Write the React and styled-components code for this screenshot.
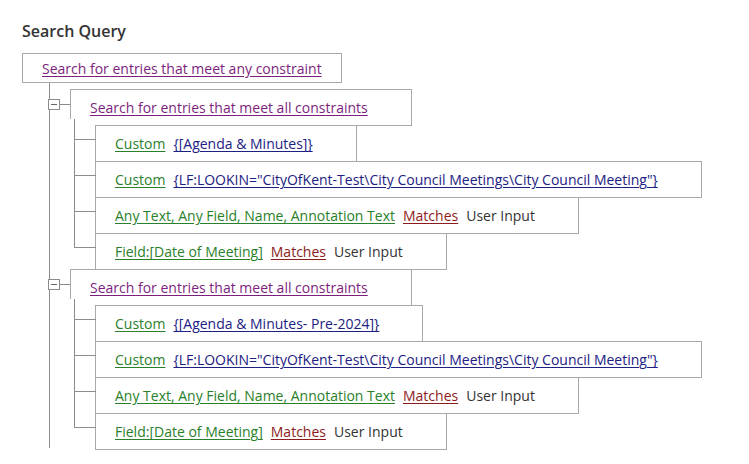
import React from 'react';
import styled, { createGlobalStyle } from 'styled-components';

const GlobalStyle = createGlobalStyle`
  body {
    margin: 0;
    background: #fff;
    font-family: 'Open Sans', 'Liberation Sans', sans-serif;
  }
`;

const LINE = '#8c8c8c';
const BOX = '#a9a9a9';

const Page = styled.div`
  padding: 20px 22px;
  font-size: 14px;
`;

const Title = styled.h2`
  margin: 0 0 11px;
  font-size: 16px;
  font-weight: 600;
  line-height: 22px;
  color: #333;
`;

const RootBox = styled.div`
  width: fit-content;
  height: 30px;
  box-sizing: border-box;
  border: 1px solid ${BOX};
  padding: 0 19px;
  display: flex;
  align-items: center;
`;

const Tree = styled.div`
  position: relative;
  margin-left: 27px;
  padding-top: 6px;
  &::before {
    content: '';
    position: absolute;
    left: 0;
    top: 0;
    bottom: 2px;
    border-left: 1px solid ${LINE};
  }
`;

const Group = styled.div`
  position: relative;
  padding-left: 21px;
  & + & {
    margin-top: -1px;
  }
`;

const Toggle = styled.span`
  position: absolute;
  left: -1px;
  top: 10px;
  width: 12px;
  height: 11px;
  box-sizing: border-box;
  border: 1px solid ${LINE};
  background: #fff;
  z-index: 2;
  &::after {
    content: '';
    position: absolute;
    left: 2px;
    right: 2px;
    top: 4px;
    border-top: 1px solid #666;
  }
`;

const Elbow = styled.span`
  position: absolute;
  left: 11px;
  top: 15px;
  width: 10px;
  border-top: 1px solid ${LINE};
`;

const Box = styled.div`
  width: fit-content;
  height: 37px;
  box-sizing: border-box;
  border: 1px solid ${BOX};
  padding: 0 43px 0 19px;
  display: flex;
  align-items: center;
  gap: 8px;
  white-space: nowrap;
`;

const Children = styled.div`
  position: relative;
  margin: -1px 0 0 4px;
  padding-left: 21px;
  display: flex;
  flex-direction: column;
  align-items: flex-start;
  &::before {
    content: '';
    position: absolute;
    left: -4px;
    width: 25px;
    top: -6px;
    bottom: 0;
    background: #fff;
  }
  &::after {
    content: '';
    position: absolute;
    left: 0;
    top: -6px;
    bottom: 22px;
    border-left: 1px solid ${LINE};
  }
`;

const Row = styled(Box)`
  position: relative;
  & + & {
    margin-top: -1px;
  }
  &::before {
    content: '';
    position: absolute;
    left: -22px;
    top: 13px;
    width: 22px;
    border-top: 1px solid ${LINE};
  }
`;

const colors = {
  purple: '#7d1f7d',
  green: '#2a7f2a',
  blue: '#1c2183',
  red: '#8e1b1b',
  plain: '#333',
};

const Part = styled.span`
  color: ${(p) => colors[p.$tone]};
  text-decoration: ${(p) => (p.$tone === 'plain' ? 'none' : 'underline')};
  text-underline-offset: 2px;
  cursor: ${(p) => (p.$tone === 'plain' ? 'default' : 'pointer')};
`;

const lookin =
  '{LF:LOOKIN="CityOfKent-Test\\City Council Meetings\\City Council Meeting"}';

const groups = [
  {
    rows: [
      [['green', 'Custom'], ['blue', '{[Agenda & Minutes]}']],
      [['green', 'Custom'], ['blue', lookin]],
      [
        ['green', 'Any Text, Any Field, Name, Annotation Text'],
        ['red', 'Matches'],
        ['plain', 'User Input'],
      ],
      [['green', 'Field:[Date of Meeting]'], ['red', 'Matches'], ['plain', 'User Input']],
    ],
  },
  {
    rows: [
      [['green', 'Custom'], ['blue', '{[Agenda & Minutes- Pre-2024]}']],
      [['green', 'Custom'], ['blue', lookin]],
      [
        ['green', 'Any Text, Any Field, Name, Annotation Text'],
        ['red', 'Matches'],
        ['plain', 'User Input'],
      ],
      [['green', 'Field:[Date of Meeting]'], ['red', 'Matches'], ['plain', 'User Input']],
    ],
  },
];

export default function App() {
  return (
    <>
      <GlobalStyle />
      <Page>
        <Title>Search Query</Title>
        <RootBox>
          <Part $tone="purple">Search for entries that meet any constraint</Part>
        </RootBox>
        <Tree>
          {groups.map((g, gi) => (
            <Group key={gi}>
              <Toggle />
              <Elbow />
              <Box>
                <Part $tone="purple">Search for entries that meet all constraints</Part>
              </Box>
              <Children>
                {g.rows.map((parts, ri) => (
                  <Row key={ri}>
                    {parts.map(([tone, text], pi) => (
                      <Part key={pi} $tone={tone}>
                        {text}
                      </Part>
                    ))}
                  </Row>
                ))}
              </Children>
            </Group>
          ))}
        </Tree>
      </Page>
    </>
  );
}
